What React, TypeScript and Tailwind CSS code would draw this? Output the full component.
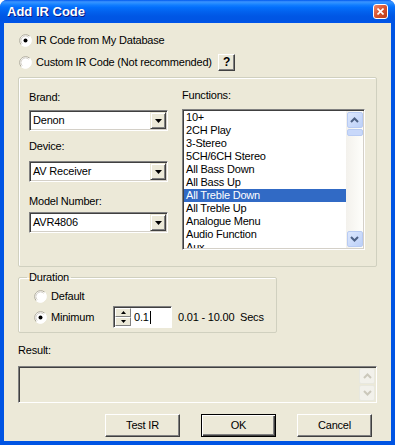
import { useState } from "react";

const functions = [
  "10+",
  "2CH Play",
  "3-Stereo",
  "5CH/6CH Stereo",
  "All Bass Down",
  "All Bass Up",
  "All Treble Down",
  "All Treble Up",
  "Analogue Menu",
  "Audio Function",
  "Aux",
];

function Radio({ checked }: { checked?: boolean }) {
  return (
    <svg width="13" height="13" viewBox="0 0 13 13" className="shrink-0">
      <circle cx="6.5" cy="6.5" r="6" fill="#fff" />
      <path d="M10.74 2.26 A6 6 0 0 0 2.26 10.74" fill="none" stroke="#ACA899" />
      <path d="M9.68 3.32 A4.5 4.5 0 0 0 3.32 9.68" fill="none" stroke="#D4D0C8" />
      <path d="M2.26 10.74 A6 6 0 0 0 10.74 2.26" fill="none" stroke="#fff" />
      {checked && <circle cx="6.5" cy="6.5" r="2" fill="#000" />}
    </svg>
  );
}

function DropButton() {
  return (
    <div className="w-[16px] h-[17px] flex items-center justify-center bg-[#ECE9D8] border border-t-[#ECE9D8] border-l-[#ECE9D8] border-b-[#404040] border-r-[#404040] shadow-[inset_1px_1px_0_#fff,inset_-1px_-1px_0_#808080]">
      <svg width="7" height="4" viewBox="0 0 7 4">
        <path d="M0 0 H7 L3.5 4 Z" fill="#000" />
      </svg>
    </div>
  );
}

function Combo({ value }: { value: string }) {
  return (
    <div className="h-[21px] w-[139px] flex items-center bg-white border border-t-[#808080] border-l-[#808080] border-b-white border-r-white shadow-[inset_1px_1px_0_#404040,inset_-1px_-1px_0_#D4D0C8] p-[1px] pl-[3px]">
      <span className="flex-1">{value}</span>
      <DropButton />
    </div>
  );
}

function Chevron({ up, color }: { up?: boolean; color: string }) {
  return (
    <svg width="9" height="6" viewBox="0 0 9 6">
      <path d={up ? "M1 5 L4.5 1.5 L8 5" : "M1 1 L4.5 4.5 L8 1"} fill="none" stroke={color} strokeWidth="2" />
    </svg>
  );
}

function ScrollBtn({ up, disabled }: { up?: boolean; disabled?: boolean }) {
  return (
    <div
      className={
        disabled
          ? "w-[16px] h-[16px] flex items-center justify-center rounded-[2px] border border-[#E8E8DF] bg-[#F2F1EB]"
          : "w-[16px] h-[16px] flex items-center justify-center rounded-[2px] border border-[#B8CBF3] bg-[linear-gradient(135deg,#DCE7FD,#BCD0F8)]"
      }
    >
      <Chevron up={up} color={disabled ? "#CBC8BB" : "#4D6185"} />
    </div>
  );
}

export default function App() {
  const [selected, setSelected] = useState(6);

  return (
    <div className="w-[395px] h-[445px] flex flex-col bg-[#0054E3] rounded-t-[7px] overflow-hidden font-['Liberation_Sans',Arial,sans-serif] text-[11px] leading-[13px] tracking-[-0.2px] text-black">
      {/* title bar */}
      <div className="h-[23px] shrink-0 flex items-center pl-[7px] pr-[7px] bg-[linear-gradient(to_bottom,#0058EE_0%,#3A93FF_8%,#288EFF_14%,#127DFF_22%,#036FFC_32%,#0262EE_50%,#0057E5_70%,#0054E3_90%,#0055EB_100%)]">
        <span className="flex-1 text-white font-bold text-[13px] tracking-normal [text-shadow:1px_1px_0_#0A1883]">Add IR Code</span>
        <div className="w-[15px] h-[15px] rounded-[3px] border border-white bg-[linear-gradient(135deg,#F0876A,#D8532E_50%,#B93C17)] flex items-center justify-center">
          <svg width="7" height="7" viewBox="0 0 7 7">
            <path d="M0.5 0.5 L6.5 6.5 M6.5 0.5 L0.5 6.5" stroke="#fff" strokeWidth="1.6" />
          </svg>
        </div>
      </div>

      {/* body */}
      <div className="flex-1 mx-[4px] mb-[4px] bg-[#ECE9D8] px-[14px] flex flex-col">
        <div className="mt-[10px] h-[14px] flex items-center gap-[4px] ml-[1px]">
          <Radio checked />
          <span className="whitespace-nowrap">IR Code from My Database</span>
        </div>
        <div className="mt-[7px] h-[17px] flex items-center gap-[4px] ml-[1px]">
          <Radio />
          <span className="w-[178px] whitespace-nowrap">Custom IR Code (Not recommended)</span>
          <div className="w-[17px] h-[17px] flex items-center justify-center font-bold text-[12px] bg-[#ECE9D8] border border-t-white border-l-white border-b-[#404040] border-r-[#404040] shadow-[inset_-1px_-1px_0_#808080]">
            ?
          </div>
        </div>

        {/* main group */}
        <div className="mt-[6px] h-[190px] shrink-0 rounded-[2px] border border-[#D0D0BF] shadow-[inset_1px_1px_0_#fff] flex pl-[10px]">
          <div className="w-[139px] flex flex-col">
            <span className="mt-[13px]">Brand:</span>
            <div className="mt-[6px]"><Combo value="Denon" /></div>
            <span className="mt-[9px]">Device:</span>
            <div className="mt-[8px]"><Combo value="AV Receiver" /></div>
            <span className="mt-[13px]">Model Number:</span>
            <div className="mt-[4px]"><Combo value="AVR4806" /></div>
          </div>
          <div className="ml-[14px] w-[183px] flex flex-col">
            <span className="mt-[11px]">Functions:</span>
            <div className="mt-[7px] h-[141px] flex bg-white border border-t-[#808080] border-l-[#808080] border-b-white border-r-white shadow-[inset_1px_1px_0_#404040,inset_-1px_-1px_0_#D4D0C8] p-[1px] overflow-hidden">
              <div className="flex-1 flex flex-col overflow-hidden">
                {functions.map((f, i) => (
                  <div
                    key={f}
                    onClick={() => setSelected(i)}
                    className={
                      i === selected
                        ? "h-[13px] shrink-0 pl-[2px] bg-[#316AC5] text-white"
                        : "h-[13px] shrink-0 pl-[2px]"
                    }
                  >
                    {f}
                  </div>
                ))}
              </div>
              <div className="w-[17px] flex flex-col items-center bg-[linear-gradient(to_right,#F3F1EC,#FEFEFB)] py-[1px]">
                <ScrollBtn up />
                <div className="w-[16px] h-[7px] mt-[1px] rounded-[2px] border border-[#B8CBF3] bg-[#C8D8FA]" />
                <div className="flex-1" />
                <ScrollBtn />
              </div>
            </div>
          </div>
        </div>

        {/* duration */}
        <fieldset className="mt-[4px] w-[259px] h-[62px] shrink-0 rounded-[2px] border border-[#D0D0BF] shadow-[inset_1px_1px_0_#fff] pl-[15px]">
          <legend className="ml-[-7px] px-[2px]">Duration</legend>
          <div className="mt-[5px] h-[14px] flex items-center gap-[4px]">
            <Radio />
            <span>Default</span>
          </div>
          <div className="mt-[3px] h-[22px] flex items-center gap-[4px]">
            <Radio checked />
            <span className="w-[58px]">Minimum</span>
            <div className="w-[59px] h-[22px] flex border border-t-[#808080] border-l-[#808080] border-b-white border-r-white shadow-[inset_1px_1px_0_#404040] bg-white p-[1px]">
              <div className="w-[16px] flex flex-col">
                <div className="flex-1 flex items-center justify-center bg-[#ECE9D8] border border-t-white border-l-white border-b-[#808080] border-r-[#808080]">
                  <svg width="5" height="3" viewBox="0 0 5 3"><path d="M2.5 0 L5 3 H0 Z" fill="#000" /></svg>
                </div>
                <div className="flex-1 flex items-center justify-center bg-[#ECE9D8] border border-t-white border-l-white border-b-[#808080] border-r-[#808080]">
                  <svg width="5" height="3" viewBox="0 0 5 3"><path d="M0 0 H5 L2.5 3 Z" fill="#000" /></svg>
                </div>
              </div>
              <div className="flex-1 flex items-center pl-[3px]">
                <span>0.1</span>
                <span className="w-px h-[13px] bg-black ml-[1px]" />
              </div>
            </div>
            <span className="ml-[2px] whitespace-pre">0.01 - 10.00  Secs</span>
          </div>
        </fieldset>

        <span className="mt-[11px]">Result:</span>
        <div className="mt-[9px] h-[37px] shrink-0 flex justify-end items-start border border-t-[#808080] border-l-[#808080] border-b-white border-r-white shadow-[inset_1px_1px_0_#404040] bg-[#ECE9D8] p-[1px]">
          <div className="flex flex-col gap-[1px]">
            <ScrollBtn up disabled />
            <ScrollBtn disabled />
          </div>
        </div>

        <div className="mt-[11px] flex justify-end gap-[21px] pr-[5px]">
          <button className="w-[75px] h-[23px] bg-[#ECE9D8] border border-t-white border-l-white border-b-[#404040] border-r-[#404040] shadow-[inset_-1px_-1px_0_#808080]">
            Test IR
          </button>
          <button className="w-[75px] h-[23px] bg-[#ECE9D8] border border-black shadow-[inset_1px_1px_0_#fff,inset_-1px_-1px_0_#404040,inset_-2px_-2px_0_#808080]">
            OK
          </button>
          <button className="w-[75px] h-[23px] bg-[#ECE9D8] border border-t-white border-l-white border-b-[#404040] border-r-[#404040] shadow-[inset_-1px_-1px_0_#808080]">
            Cancel
          </button>
        </div>
      </div>
    </div>
  );
}
